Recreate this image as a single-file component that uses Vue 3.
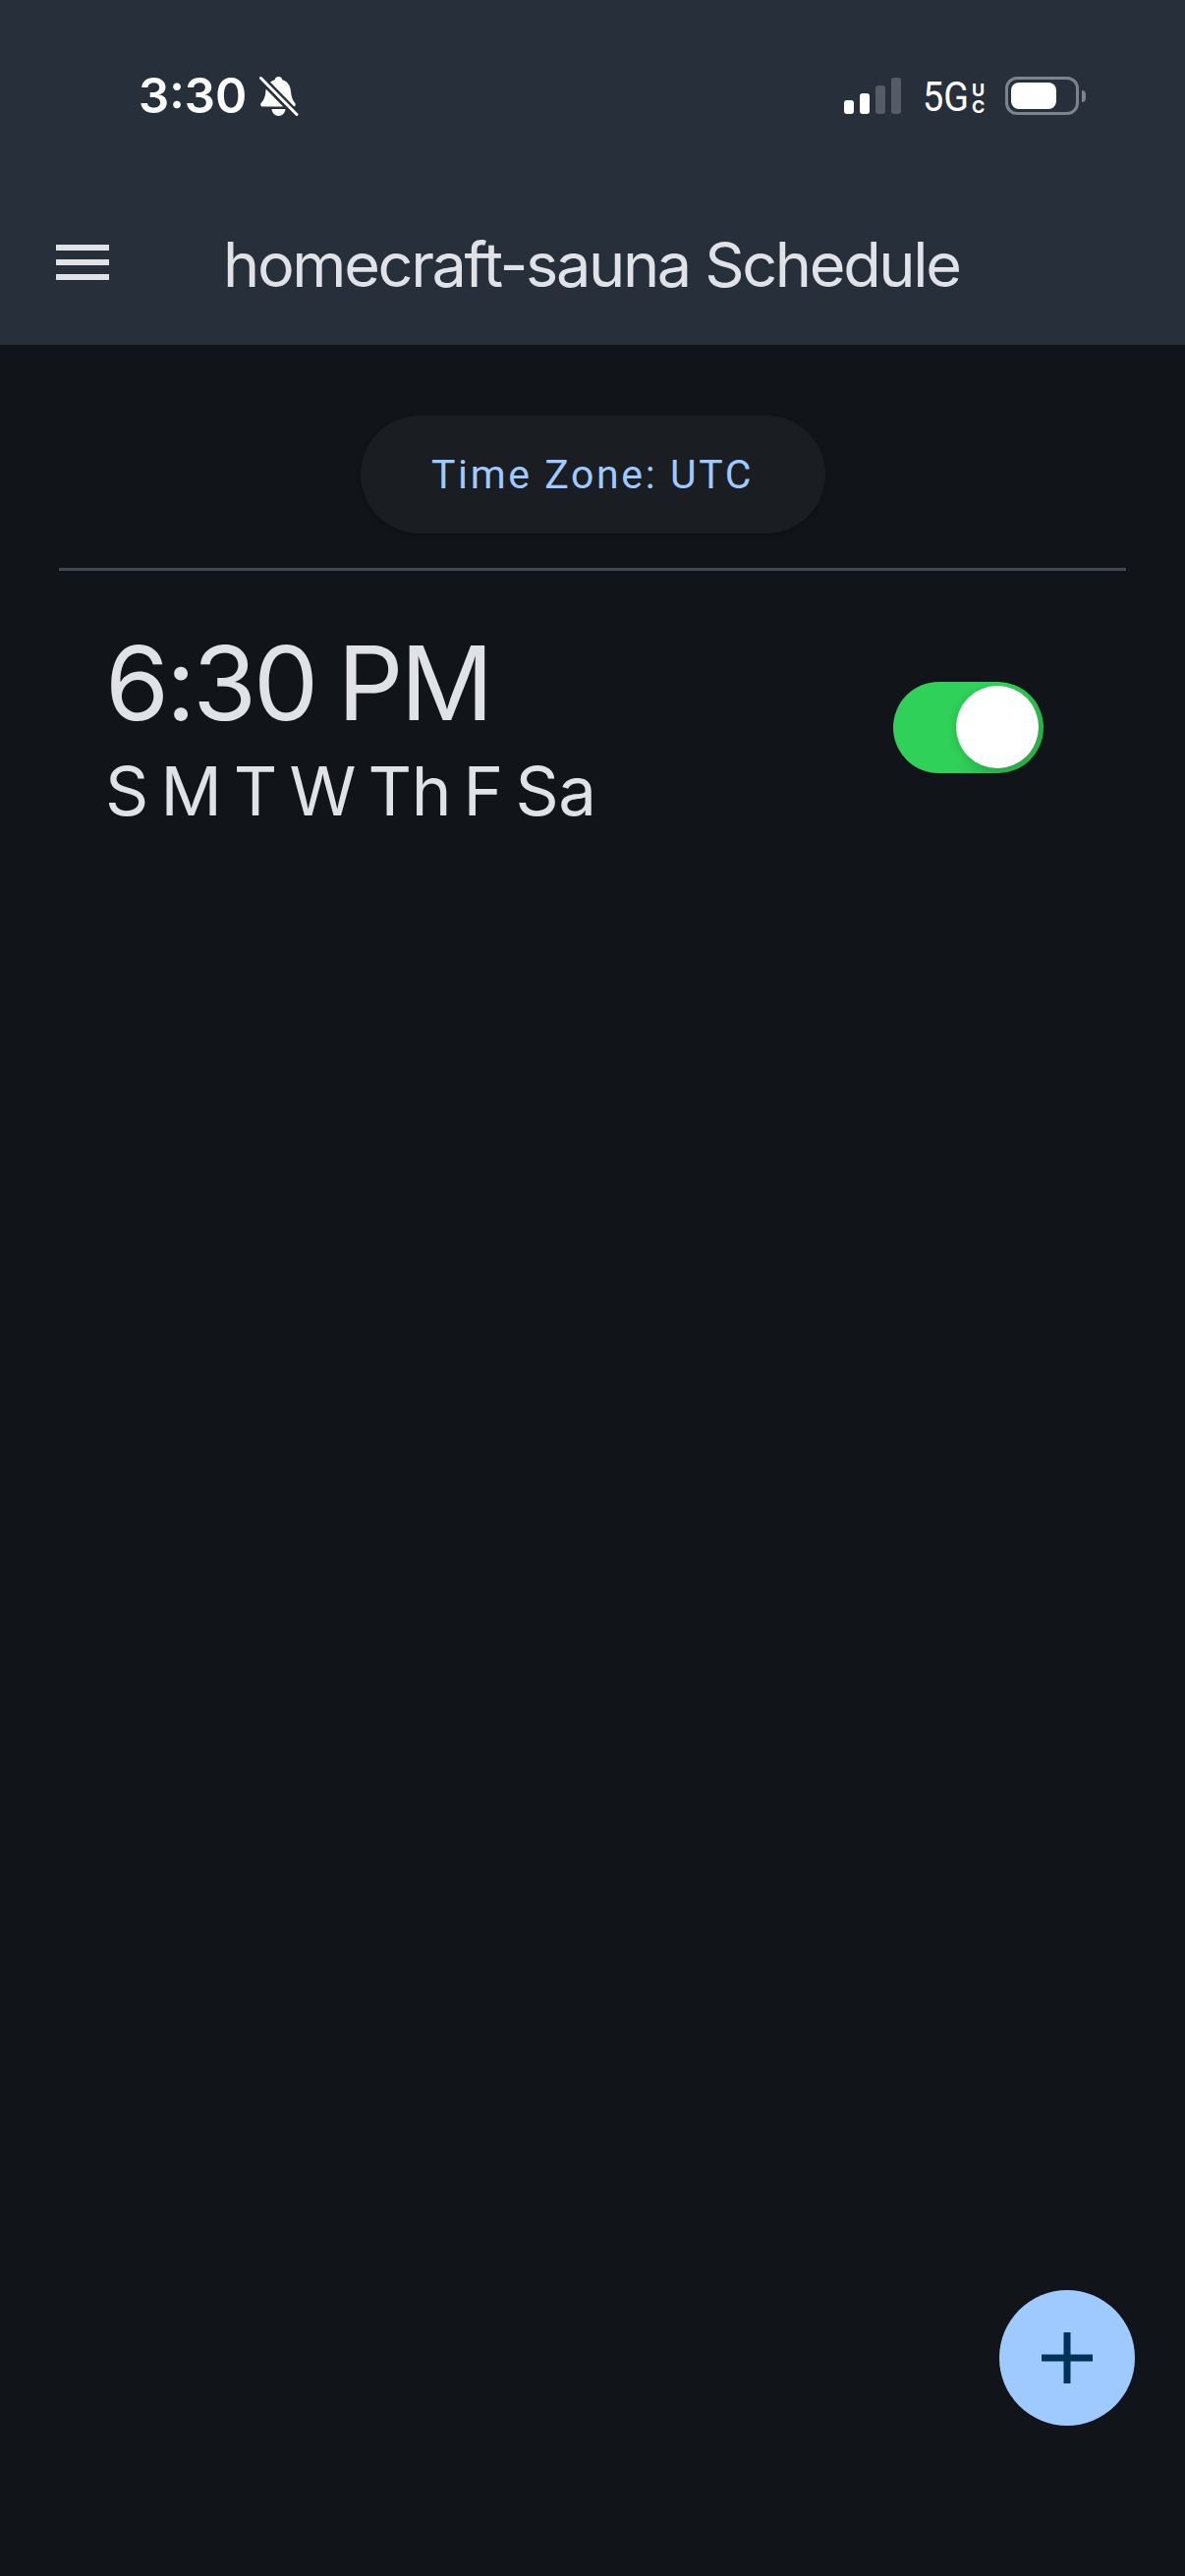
<template>
  <div class="screen">
    <header class="app-header">
      <div class="status-bar">
        <div class="status-left">
          <span class="clock">3:30</span>
          <svg class="bell" viewBox="0 0 40 42" width="40" height="42">
            <path d="M19.500 1c2.400 0 3.500 1.500 3.900 3.200C29 5.800 31.500 10.500 32 16c.4 5 1.500 8.500 4 11.500 1.300 1.600 1 4-1.500 4H3.500C1 31.500.6 29 2 27.500c2.800-3 4-6.500 4.400-11.500C7 10.500 10 5.800 15.600 4.200 16 2.500 17.100 1 19.500 1z" fill="#fff"/>
            <path d="M12.500 34h14c-.4 4-3.300 7-7 7s-6.600-3-7-7z" fill="#fff"/>
            <path d="M1 2l37 38" stroke="#272f3b" stroke-width="8" fill="none"/>
            <path d="M1.500 2.500l36.500 37" stroke="#fff" stroke-width="3" stroke-linecap="round" fill="none"/>
          </svg>
        </div>
        <div class="status-right">
          <div class="signal">
            <span class="bar on b1"></span>
            <span class="bar on b2"></span>
            <span class="bar b3"></span>
            <span class="bar b4"></span>
          </div>
          <div class="network">
            <span class="net-big">5G</span>
            <span class="net-small"><span>U</span><span>C</span></span>
          </div>
          <div class="battery">
            <div class="battery-shell"><div class="battery-fill"></div></div>
            <div class="battery-nub"></div>
          </div>
        </div>
      </div>
      <div class="toolbar">
        <svg class="menu" viewBox="0 0 54 36" width="54" height="36">
          <path d="M0 3h54M0 18h54M0 33h54" stroke="#e1e2e8" stroke-width="6" fill="none"/>
        </svg>
        <h1 class="title">homecraft-sauna Schedule</h1>
      </div>
    </header>

    <main class="content">
      <div class="zone-row">
        <div class="zone-pill">Time Zone: UTC</div>
      </div>
      <div class="divider"></div>
      <div class="schedule-row" v-for="item in schedules" :key="item.time">
        <div class="schedule-text">
          <div class="time">{{ item.time }}</div>
          <div class="days">{{ item.days }}</div>
        </div>
        <div class="toggle" :class="{ on: item.enabled }">
          <div class="knob"></div>
        </div>
      </div>
    </main>

    <button class="fab">
      <svg viewBox="0 0 52 52" width="52" height="52">
        <path d="M26 0v52M0 26h52" stroke="#003258" stroke-width="7" fill="none"/>
      </svg>
    </button>
  </div>
</template>

<script setup>
import { ref } from 'vue'

const schedules = ref([
  { time: '6:30 PM', days: 'S M T W Th F Sa', enabled: true }
])
</script>

<style>
html, body {
  margin: 0;
  background: #111419;
}
</style>

<style scoped>
.screen {
  position: relative;
  width: 1206px;
  height: 2622px;
  overflow: hidden;
  background: #111419;
  color: #e1e2e8;
  font-family: Inter, "Liberation Sans", sans-serif;
}

.app-header {
  height: 351px;
  box-sizing: border-box;
  background: #272f3b;
}

.status-bar {
  height: 196px;
  box-sizing: border-box;
  padding: 77px 101px 0 141px;
  display: flex;
  justify-content: space-between;
  align-items: flex-start;
}

.status-left {
  display: flex;
  align-items: center;
  gap: 13px;
}

.clock {
  font-size: 49px;
  font-weight: 600;
  line-height: 42px;
  color: #fff;
}

.status-right {
  display: flex;
  align-items: flex-start;
  padding-top: 1px;
}

.signal {
  display: flex;
  align-items: flex-end;
  gap: 6px;
  height: 38px;
  margin-right: 22px;
}

.bar {
  width: 10px;
  border-radius: 3px;
  background: #555c67;
}

.bar.on { background: #fff; }
.b1 { height: 14px; }
.b2 { height: 21px; }
.b3 { height: 29px; }
.b4 { height: 37px; }

.network {
  display: flex;
  align-items: flex-start;
  gap: 3px;
  margin-right: 21px;
  color: #fff;
  padding-top: 5px;
}

.net-big {
  width: 47px;
  font-family: Roboto, "Liberation Sans", sans-serif;
  font-size: 42px;
  line-height: 32px;
  transform: scaleX(0.9);
  transform-origin: left center;
}

.net-small {
  display: flex;
  flex-direction: column;
  width: 13px;
  font-size: 18px;
  font-weight: 700;
  line-height: 17px;
  text-align: center;
}

.battery {
  display: flex;
  align-items: center;
  gap: 3px;
}

.battery-shell {
  width: 75px;
  height: 39px;
  box-sizing: border-box;
  border: 3px solid #7d838c;
  border-radius: 12px;
  padding: 3px;
}

.battery-fill {
  width: 46px;
  height: 100%;
  border-radius: 8px;
  background: #fff;
}

.battery-nub {
  width: 4px;
  height: 12px;
  border-radius: 0 6px 6px 0;
  background: #7d838c;
}

.toolbar {
  display: flex;
  align-items: center;
  height: 150px;
  padding: 0 0 8px 57px;
  box-sizing: border-box;
}

.title {
  margin: 4px 0 0 116px;
  font-size: 63px;
  font-weight: 400;
  line-height: 72px;
  letter-spacing: -2.35px;
  color: #e1e2e8;
  white-space: nowrap;
}

.content {
  padding: 72px 60px 0;
}

.zone-row {
  display: flex;
  justify-content: center;
}

.zone-pill {
  width: 473px;
  height: 120px;
  display: flex;
  align-items: center;
  justify-content: center;
  border-radius: 60px;
  background: #1a1d22;
  box-shadow: 0 2px 4px rgba(0, 0, 0, 0.25);
  font-family: Roboto, "Liberation Sans", sans-serif;
  font-size: 41px;
  letter-spacing: 2.6px;
  color: #9fcaff;
}

.divider {
  height: 3px;
  margin-top: 35px;
  background: #43474e;
}

.schedule-row {
  display: flex;
  align-items: center;
  justify-content: space-between;
  padding: 54px 84px 0 47px;
}

.time {
  font-size: 105px;
  line-height: 120px;
  letter-spacing: -3.1px;
  word-spacing: -4px;
}

.days {
  margin-top: 10px;
  font-size: 69px;
  line-height: 80px;
  letter-spacing: -0.4px;
  word-spacing: -6.5px;
}

.toggle {
  display: flex;
  align-items: center;
  justify-content: flex-end;
  width: 153px;
  height: 93px;
  box-sizing: border-box;
  padding: 0 5px;
  border-radius: 47px;
  background: #2cb64f;
}

.toggle.on {
  background: linear-gradient(120deg, #30d158 55%, #2bb34d 85%);
}

.knob {
  width: 84px;
  height: 84px;
  border-radius: 50%;
  background: #fff;
  box-shadow: -2px 2px 8px rgba(0, 0, 0, 0.12);
}

.fab {
  position: absolute;
  left: 1017px;
  top: 2331px;
  display: flex;
  align-items: center;
  justify-content: center;
  width: 138px;
  height: 138px;
  padding: 0;
  border: none;
  border-radius: 50%;
  background: #9fcaff;
}
</style>
